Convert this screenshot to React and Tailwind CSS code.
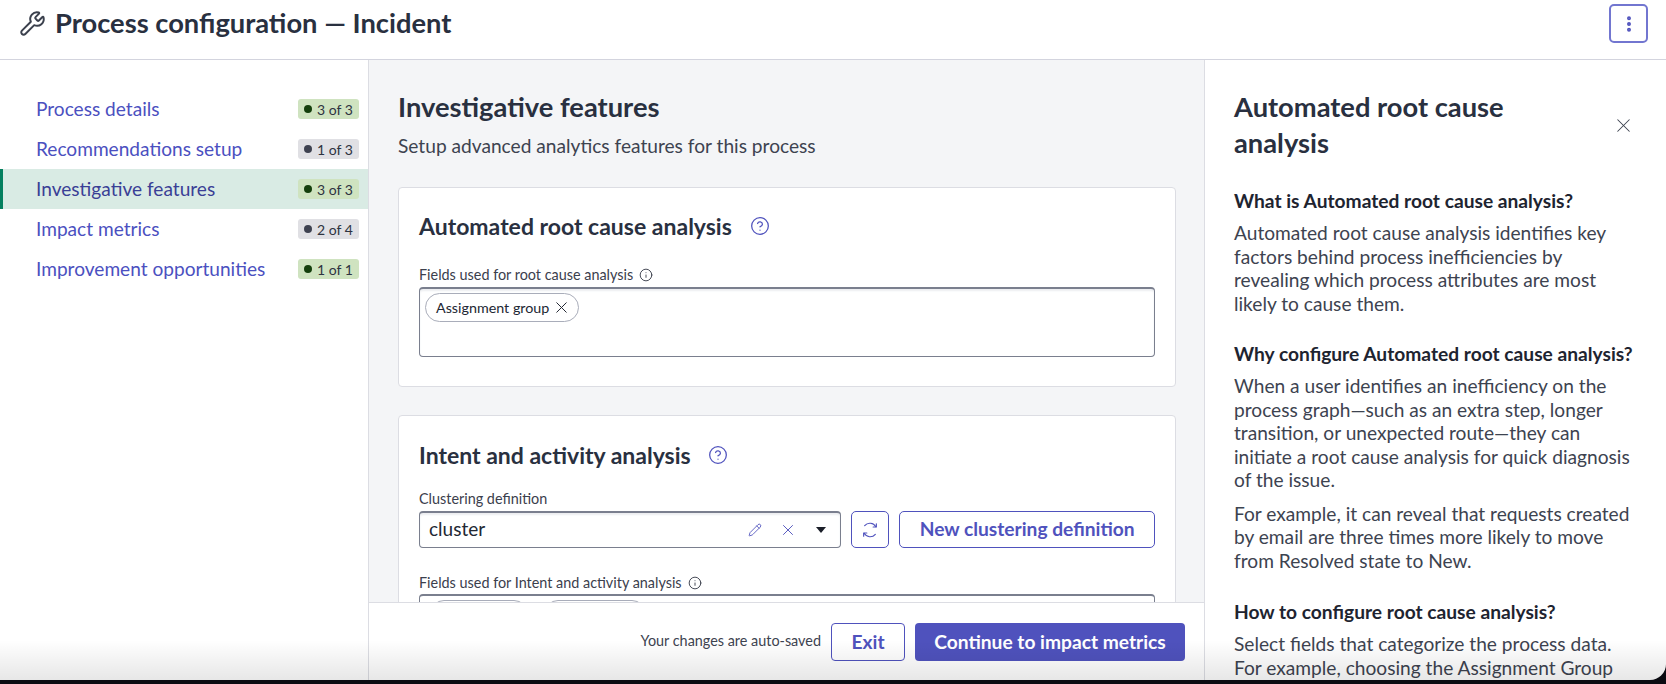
import React from 'react';
import { Wrench, EllipsisVertical, X, CircleHelp, Info, Pencil } from 'lucide-react';

const steps = [
    { name: 'Process details', count: '3 of 3', done: true },
    { name: 'Recommendations setup', count: '1 of 3', done: false },
    { name: 'Investigative features', count: '3 of 3', done: true, active: true },
    { name: 'Impact metrics', count: '2 of 4', done: false },
    { name: 'Improvement opportunities', count: '1 of 1', done: true },
];

const StepRow = ({ step }) => (
    <li className={`h-10 flex items-center justify-between pl-[36px] pr-[9px] relative ${step.active ? 'bg-[#d9ebe4]' : ''}`}>
        {step.active && <span className="absolute left-0 top-0 bottom-0 w-[3px] bg-[#04805f]" />}
        <span className={`text-[19.1px] ${step.active ? 'text-[#3a3f96]' : 'text-[#4b50c0]'}`}>{step.name}</span>
        <span className={`w-[61px] h-[20px] rounded-[3px] flex items-center justify-center gap-[5px] text-[14px] text-[#2e3340] ${step.done ? 'bg-[#cfe3c0]' : 'bg-[#e0e0e4]'}`}>
            <span className={`w-2 h-2 rounded-full ${step.done ? 'bg-[#143f0c]' : 'bg-[#3e4250]'}`} />
            {step.count}
        </span>
    </li>
);

const Chip = ({ children }) => (
    <span className="h-[29px] inline-flex items-center gap-[3px] pl-[10px] pr-[7px] rounded-full border border-[#a9adba] text-[14.3px] text-[#222733]">
        {children}
        <X size={19} strokeWidth={1.25} />
    </span>
);

const Card = ({ title, className, children }) => (
    <section className={`bg-white border border-[#dcdde3] rounded-[4px] px-5 ${className}`}>
        {title}
        {children}
    </section>
);

const CardTitle = ({ text, gap }) => (
    <div className={`flex items-center ${gap}`}>
        <h2 className="text-[23px] leading-7 font-bold text-[#293040]">{text}</h2>
        <CircleHelp size={20} strokeWidth={1.5} className="text-[#4f52bd]" />
    </div>
);

const FieldLabel = ({ text, hasInfo }) => (
    <div className="flex items-center gap-[6px] h-5 text-[14.4px] text-[#3b404d]">
        {text}
        {hasInfo && <Info size={14} strokeWidth={1.5} className="text-[#2f3441]" />}
    </div>
);

const HelpSection = ({ heading, paragraphs, className }) => (
    <div className={className}>
        <h3 className="text-[19.2px] leading-6 font-bold text-[#1e2430]">{heading}</h3>
        {paragraphs.map((text, i) => (
            <p key={text} className={`${i > 0 ? 'mt-[10px]' : 'mt-[8px]'} text-[19.15px] leading-[23.5px] text-[#3d4350]`}>{text}</p>
        ))}
    </div>
);

// two thin arcs with small arrow heads, lucide's refresh icon has much larger corners
const RefreshIcon = () => (
    <svg width="20" height="20" viewBox="0 0 24 24" fill="none" stroke="currentColor" strokeWidth="1.4" strokeLinecap="round" strokeLinejoin="round">
        <path d="M19 8A8.2 8.2 0 0 0 5.6 6.8" />
        <path d="M5 16a8.2 8.2 0 0 0 13.4 1.2" />
        <path d="M19.6 4.6V8.4H15.8" />
        <path d="M4.4 19.4V15.6H8.2" />
    </svg>
);

export default function App() {
    return (
        <div className="relative h-[684px] w-[1666px] overflow-hidden flex flex-col bg-[#0b0b12] font-['Lato','Noto_Sans',sans-serif]">
            <div className="h-[680px] flex flex-col bg-white overflow-hidden rounded-br-[16px]">
                <header className="h-[60px] shrink-0 flex items-start justify-between border-b border-[#d3d4de] pl-[19px] pr-[18px] pt-[4px]">
                    <div className="h-[39px] flex items-center gap-[9px]">
                        <Wrench size={27} strokeWidth={1.75} className="text-[#3b404d]" />
                        <h1 className="text-[27.3px] font-bold text-[#293040]">Process configuration — Incident</h1>
                    </div>
                    <button className="w-[39px] h-[39px] flex items-center justify-center rounded-[5px] border-2 border-[#7276d0] text-[#4f52bd]">
                        <EllipsisVertical size={20} strokeWidth={2.75} />
                    </button>
                </header>

                <div className="flex-1 flex min-h-0">
                    <nav className="w-[369px] shrink-0 border-r border-[#dcdde3] pt-[29px]">
                        <ul>
                            {steps.map((step) => <StepRow key={step.name} step={step} />)}
                        </ul>
                    </nav>

                    <main className="w-[836px] shrink-0 flex flex-col bg-[#f4f5f7] border-r border-[#dcdde3] min-h-0">
                        <div className="flex-1 overflow-hidden pl-[29px] pr-[28px] pt-[29px] min-h-0">
                            <h1 className="text-[27.3px] leading-9 font-bold text-[#293040]">Investigative features</h1>
                            <p className="mt-[9px] text-[19.15px] leading-6 text-[#3d4350]">Setup advanced analytics features for this process</p>

                            <Card className="mt-[29px] h-[200px] pt-[24px]" title={<CardTitle text="Automated root cause analysis" gap="gap-[18px]" />}>
                                <div className="mt-[25px]"><FieldLabel text="Fields used for root cause analysis" hasInfo /></div>
                                <div className="mt-[2px] h-[70px] rounded-[4px] border border-[#7a7f8e] border-t-2 pl-[5px] pt-[4px] shadow-[inset_0_2px_2px_#eceef1]">
                                    <Chip>Assignment group</Chip>
                                </div>
                            </Card>

                            <Card className="mt-[28px] pt-[25px] h-[300px]" title={<CardTitle text="Intent and activity analysis" gap="gap-[17px]" />}>
                                <div className="mt-[20px]"><FieldLabel text="Clustering definition" /></div>
                                <div className="mt-[2px] flex gap-[10px]">
                                    <div className="w-[423px] h-[37px] flex items-center rounded-[4px] border border-[#7a7f8e] border-t-2 pl-[9px] pr-[14px] pb-[1px] shadow-[inset_0_2px_2px_#eceef1]">
                                        <span className="flex-1 text-[19px] text-[#222733]">cluster</span>
                                        <Pencil size={14} strokeWidth={1.5} className="text-[#4f52bd]" />
                                        <X size={18} strokeWidth={1.25} className="ml-[17px] mr-[1px] text-[#4f52bd]" />
                                        <span className="ml-[18px] w-0 h-0 border-x-[5px] border-x-transparent border-t-[6px] border-t-[#1a1e28]" />
                                    </div>
                                    <button className="w-[38px] h-[37px] flex items-center justify-center rounded-[5px] border border-[#4f52bd] bg-white text-[#4f52bd]">
                                        <RefreshIcon />
                                    </button>
                                    <button className="w-[256px] h-[37px] rounded-[5px] border border-[#4f52bd] bg-white text-[19.2px] font-bold text-[#4f52bd]">New clustering definition</button>
                                </div>
                                <div className="mt-[25px]"><FieldLabel text="Fields used for Intent and activity analysis" hasInfo /></div>
                                <div className="mt-[1px] h-[70px] rounded-[4px] border border-[#7a7f8e] border-t-2 pl-[10px] pt-[4px] flex gap-[16px]">
                                    <span className="w-[98px] h-7 rounded-full border border-[#a9adba]" />
                                    <span className="w-[102px] h-7 rounded-full border border-[#a9adba]" />
                                </div>
                            </Card>
                        </div>

                        <footer className="h-[78px] shrink-0 flex items-start justify-end gap-[10px] bg-white border-t border-[#dcdde3] pt-[20px] pr-[19px]">
                            <span className="self-center -mt-[21px] text-[14.4px] text-[#3d4350]">Your changes are auto-saved</span>
                            <button className="w-[74px] h-[38px] rounded-[4px] border border-[#4f52bd] bg-white text-[19.2px] font-bold text-[#4f52bd]">Exit</button>
                            <button className="w-[270px] h-[38px] rounded-[4px] bg-[#4f52bd] text-[19.2px] font-bold text-white">Continue to impact metrics</button>
                        </footer>
                    </main>

                    <aside className="flex-1 min-w-0 overflow-hidden pl-[29px] pr-[28px] pt-[29px]">
                        <div className="flex items-center justify-between">
                            <h1 className="w-[340px] text-[27.3px] leading-9 font-bold text-[#293040]">Automated root cause analysis</h1>
                            <X size={23} strokeWidth={1.1} className="text-[#3d4350] mr-[3px]" />
                        </div>
                        <HelpSection
                            className="mt-[28px]"
                            heading="What is Automated root cause analysis?"
                            paragraphs={['Automated root cause analysis identifies key factors behind process inefficiencies by revealing which process attributes are most likely to cause them.']}
                        />
                        <HelpSection
                            className="mt-[27px]"
                            heading="Why configure Automated root cause analysis?"
                            paragraphs={[
                                'When a user identifies an inefficiency on the process graph—such as an extra step, longer transition, or unexpected route—they can initiate a root cause analysis for quick diagnosis of the issue.',
                                'For example, it can reveal that requests created by email are three times more likely to move from Resolved state to New.',
                            ]}
                        />
                        <HelpSection
                            className="mt-[28px]"
                            heading="How to configure root cause analysis?"
                            paragraphs={['Select fields that categorize the process data. For example, choosing the Assignment Group']}
                        />
                    </aside>
                </div>
            </div>
            {/* window shadow fading into the bottom edge of the capture */}
            <div className="absolute left-0 right-0 bottom-[4px] h-[40px] bg-gradient-to-b from-transparent to-[#00000018] pointer-events-none" />
        </div>
    );
}
